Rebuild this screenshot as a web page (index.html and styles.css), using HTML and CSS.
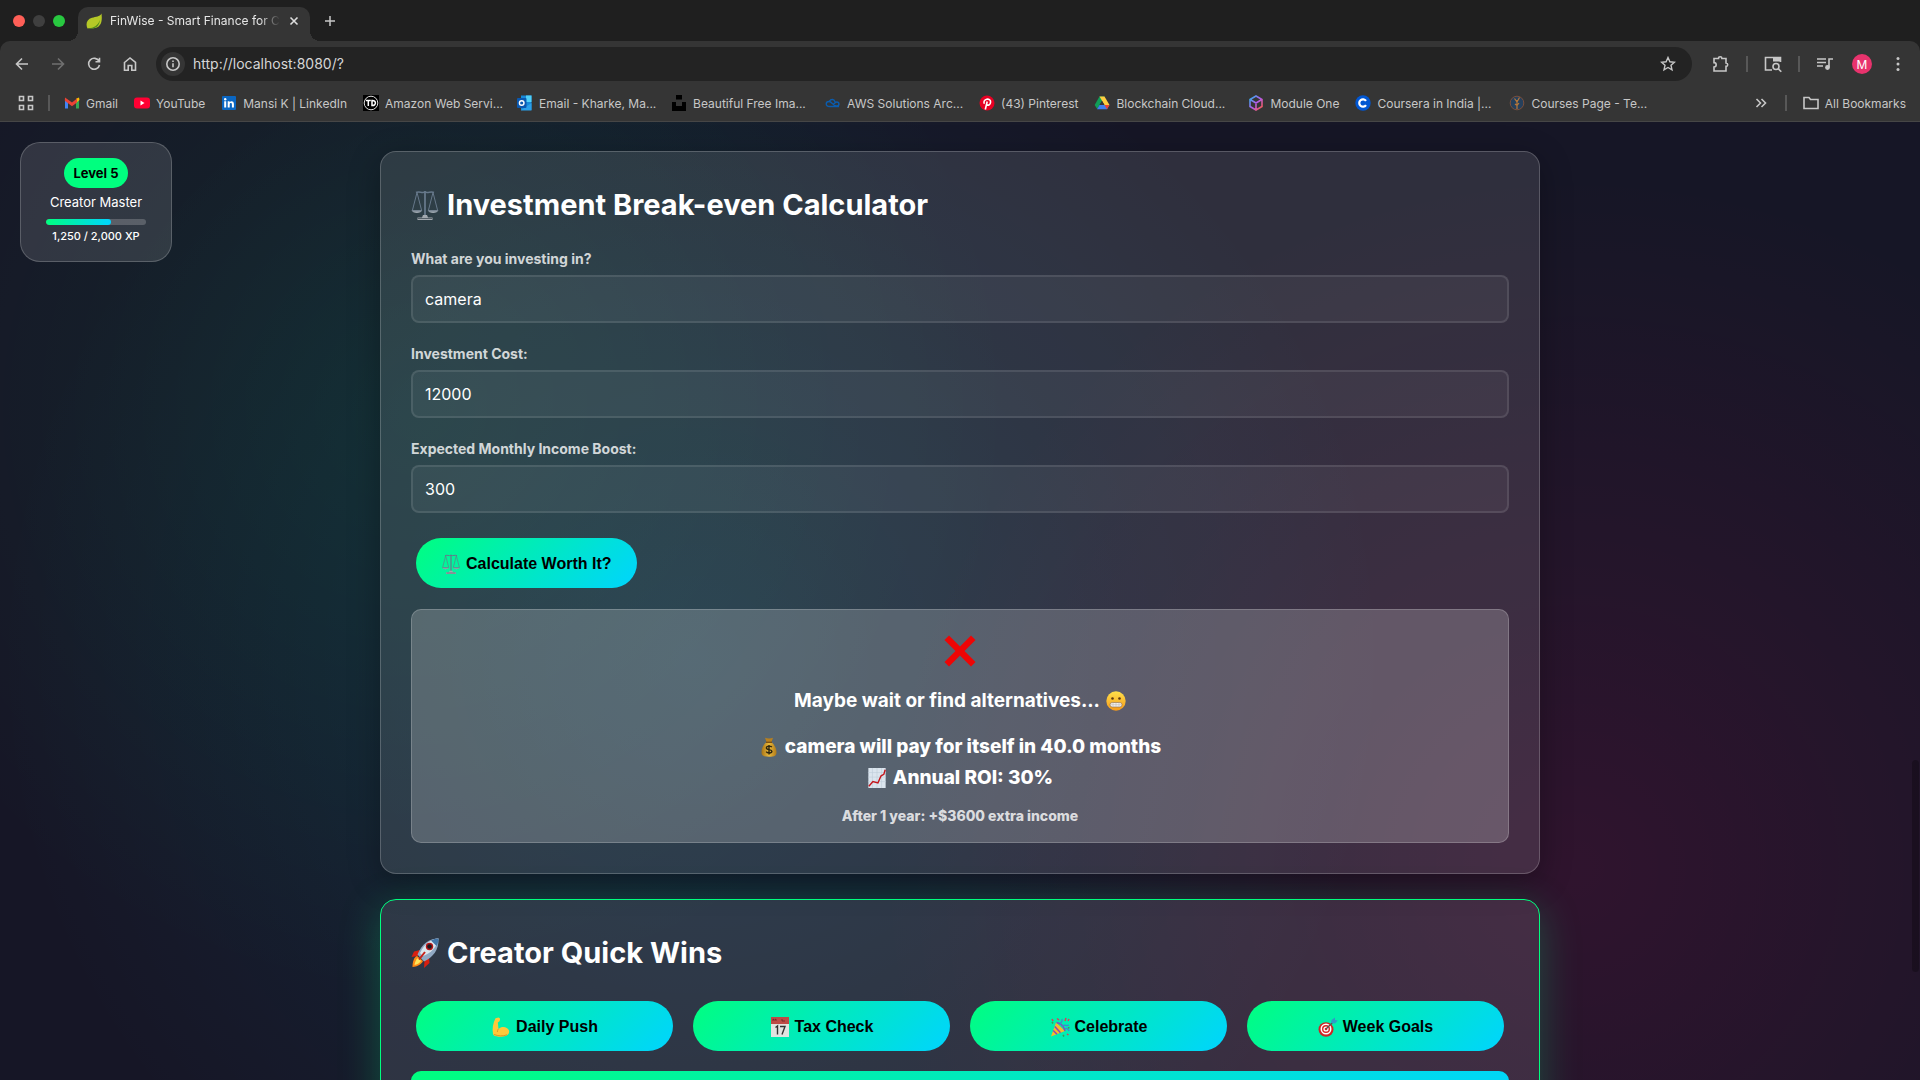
FILE: index.html
```html
<!DOCTYPE html>
<html lang="en">
<head>
<meta charset="utf-8">
<title>FinWise - Smart Finance for Creators</title>
<link rel="stylesheet" href="styles.css">
</head>
<body>
<svg class="defs" aria-hidden="true">
  <defs>
    <linearGradient id="metal" x1="0" y1="0" x2="0" y2="1"><stop offset="0" stop-color="#6c7b8a"/><stop offset="1" stop-color="#a9b1b8"/></linearGradient>
    <linearGradient id="face" x1="0" y1="0" x2="0" y2="1"><stop offset="0" stop-color="#ffe04a"/><stop offset="1" stop-color="#f59a1b"/></linearGradient>
    <linearGradient id="gold" x1="0" y1="0" x2="1" y2="0"><stop offset="0" stop-color="#a87416"/><stop offset=".5" stop-color="#e9b93c"/><stop offset="1" stop-color="#b07a18"/></linearGradient>
    <linearGradient id="cube" x1="0" y1="0" x2="1" y2="1"><stop offset="0" stop-color="#22b8e6"/><stop offset=".5" stop-color="#b05cf0"/><stop offset="1" stop-color="#ff5a3c"/></linearGradient>
    <symbol id="scale" viewBox="0 0 28 30">
      <g fill="none" stroke="#66788a" stroke-width="1"><path d="M5 2.500C8 .8 11 3.400 14 2c3 1.400 6-1.200 9 .5" stroke-width="1.500"/><path d="M6 2.500 1.500 20M6 2.500 10.500 20M22 2.500 17.500 20M22 2.500 26.500 20"/><path d="M14 1v25" stroke-width="1.800"/></g>
      <path d="M.5 20h10.800c-.8 4-10 4-10.800 0zM16.700 20h10.800c-.8 4-10 4-10.800 0z" fill="url(#metal)"/>
      <path d="M12 25h4l1 2.500h4.500V30h-15v-2.500H11z" fill="#a3a9af"/>
      <path d="M7 28.500h14" stroke="#566068"/>
    </symbol>
  </defs>
</svg>

<header class="browser">
  <div class="tabstrip">
    <div class="lights"><span class="light red"></span><span class="light grey"></span><span class="light green"></span></div>
    <div class="tab">
      <svg class="i16" viewBox="0 0 16 16"><path d="M15.500.5c.8 6.500.4 13.300-6.500 14.500-3 .5-5.500-.2-7.500.5C-.5 11 .5 6.500 6 4.800 10 3.600 13.500 4 15.500.5z" fill="#b5c827"/><path d="M1.500 15.200c6 .3 10-2.200 12.500-8.200-1 7-5 9.500-12.500 8.200z" fill="#4e8a1c"/></svg>
      <span class="tab-title">FinWise - Smart Finance for C</span>
      <button class="plain" aria-label="Close tab"><svg class="i12" viewBox="0 0 12 12"><path d="M2.500 2.500l7 7M9.500 2.500l-7 7" stroke="#ddd" stroke-width="1.600"/></svg></button>
    </div>
    <button class="plain newtab" aria-label="New tab"><svg class="i12" viewBox="0 0 12 12"><path d="M6 1v10M1 6h10" stroke="#c7c7c7" stroke-width="1.500"/></svg></button>
  </div>
  <div class="toolbar">
    <button class="plain nav" aria-label="Back"><svg class="i16" viewBox="0 0 16 16"><path d="M14 8H3M8 2.500 2.500 8 8 13.500" class="line"/></svg></button>
    <button class="plain nav dim" aria-label="Forward"><svg class="i16" viewBox="0 0 16 16"><path d="M2 8h11M8 2.500 13.500 8 8 13.500" class="line"/></svg></button>
    <button class="plain nav" aria-label="Reload"><svg class="i16" viewBox="0 0 16 16"><path d="M13 5.200A5.500 5.500 0 1 0 13.500 9M13.500 1.800v4H9.500" class="line"/></svg></button>
    <button class="plain nav" aria-label="Home"><svg class="i16" viewBox="0 0 16 16"><path d="M2.500 6.500 8 2l5.500 4.500V14.200H9.800V9.500H6.200v4.700H2.500z" class="line"/></svg></button>
    <div class="omnibox">
      <span class="siteinfo"><svg class="i16" viewBox="0 0 16 16"><circle cx="8" cy="8" r="6.200" class="line"/><path d="M8 7.300v4M8 4.500v1.500" class="line"/></svg></span>
      <input class="address" type="text" value="http://localhost:8080/?" aria-label="Address">
      <button class="plain" aria-label="Bookmark this page"><svg class="i16" viewBox="0 0 16 16"><path d="M8 1.500l1.900 4.300 4.600.4-3.500 3.100 1 4.600L8 11.500l-4 2.400 1-4.600L1.500 6.200l4.600-.4z" class="line thin"/></svg></button>
    </div>
    <div class="tools">
      <button class="plain" aria-label="Extensions"><svg class="i18" viewBox="0 0 18 18"><path d="M2 3.500h4.500a1.700 1.700 0 0 1 3.400 0H14V8a1.700 1.700 0 0 1 0 3.400v4.600H2v-4a2 2 0 0 0 0-4.400z" class="line"/></svg></button>
      <span class="bar"></span>
      <button class="plain" aria-label="Search tabs"><svg class="i18" viewBox="0 0 18 18"><path d="M8 15H1.500V2.500h15V7" class="line"/><path d="M9 2h8v4.500H9z" fill="#c7c7c7"/><circle cx="12" cy="11.500" r="3" class="line"/><path d="M14.300 13.800l3 3" class="line"/></svg></button>
      <span class="bar"></span>
      <button class="plain" aria-label="Media"><svg class="i18" viewBox="0 0 18 18"><path d="M1 4h9M1 7.500h9M1 11h6M13 12V4h4" class="line"/><circle cx="11.500" cy="12.500" r="2.400" fill="#c7c7c7"/></svg></button>
      <button class="plain avatar" aria-label="Profile">M</button>
      <button class="plain" aria-label="Menu"><svg class="i16" viewBox="0 0 16 16"><g fill="#c7c7c7"><circle cx="8" cy="2.500" r="1.500"/><circle cx="8" cy="8" r="1.500"/><circle cx="8" cy="13.500" r="1.500"/></g></svg></button>
    </div>
  </div>
  <nav class="bookmarks" aria-label="Bookmarks">
    <button class="plain" aria-label="Apps"><svg class="i16" viewBox="0 0 16 16"><path d="M1.500 1.500h4v4h-4zM10.500 1.500h4v4h-4zM1.500 10.500h4v4h-4zM10.500 10.500h4v4h-4z" class="line"/></svg></button>
    <span class="bar first"></span>
    <a class="bm" href="#"><svg class="i16" viewBox="0 0 16 16"><path d="M1 4v9.500h3V7z" fill="#4285f4"/><path d="M15 4v9.500h-3V7z" fill="#34a853"/><path d="M12 3.800 15 2.500 15.500 5 12 8z" fill="#fbbc04"/><path d="M1 2.500 8 7.500 13 3.500V7.500L8 11.300.8 5.800z" fill="#ea4335"/></svg><span>Gmail</span></a>
    <a class="bm" href="#"><svg class="i16" viewBox="0 0 16 16"><rect y="2.500" width="16" height="11" rx="3" fill="#ff0033"/><path d="M6.500 5.500v5l4-2.500z" fill="#fff"/></svg><span>YouTube</span></a>
    <a class="bm" href="#"><svg class="i16" viewBox="0 0 16 16"><rect x="1" y="1" width="14" height="14" rx="1" fill="#0a66c2"/><g fill="#fff"><circle cx="4.200" cy="4.300" r="1.200"/><path d="M3.200 6.300h2v6.200h-2zM6.700 6.300h1.900v.9c1-1.500 4.300-1.500 4.300 1.700v3.600h-2V9.400c0-2-2.200-1.800-2.200 0v3.100h-2z"/></g></svg><span>Mansi K | LinkedIn</span></a>
    <a class="bm long" href="#"><svg class="i16" viewBox="0 0 16 16"><rect width="16" height="16" fill="#000"/><circle cx="8" cy="8" r="6.800" fill="none" stroke="#ddd"/><path d="M2.800 5.500h5M5.300 5.500v5.500M9 5.500v5c4.500.5 4.500-5.500 0-5z" fill="none" stroke="#fff" stroke-width="1.500"/></svg><span>Amazon Web Servi...</span></a>
    <a class="bm long" href="#"><svg class="i16" viewBox="0 0 16 16"><path d="M4 .5h10.500V15H4z" fill="#1789d8"/><path d="M9 .5h5.500V7H9z" fill="#50d0f8"/><path d="M4 15 14.500 8v7.500H4z" fill="#2aa0ea"/><rect y="3" width="9.500" height="10" rx="1" fill="#0a58b0"/><circle cx="4.700" cy="8" r="2.300" fill="none" stroke="#fff" stroke-width="1.400"/></svg><span>Email - Kharke, Ma...</span></a>
    <a class="bm long" href="#"><svg class="i16" viewBox="0 0 16 16"><path d="M5 0h6v4.500H5zM1 7h4v4h6V7h4v9H1z"/></svg><span>Beautiful Free Ima...</span></a>
    <a class="bm long" href="#"><svg class="i16" viewBox="0 0 16 16"><path d="M14 11.500H4.500C0 11.500.5 6.500 4 6.500c3 0 4 4.500 7.500 4.500 3.500-.2 3-4 .3-4-1.500 0-2.300 1.500-3.300 2M4.500 6.300C6 3.500 9.500 4.300 10 6.800" fill="none" stroke="#0b5cad" stroke-width="1.400"/></svg><span>AWS Solutions Arc...</span></a>
    <a class="bm" href="#"><svg class="i16" viewBox="0 0 16 16"><circle cx="8" cy="8" r="7.500" fill="#e60023"/><path d="M6.300 14.500 8.200 6.500M5.300 8.800C3.200 3.500 11.800 2.400 11.600 7c-.1 3-2.800 4-4 2.300" fill="none" stroke="#fff" stroke-width="1.600"/></svg><span>(43) Pinterest</span></a>
    <a class="bm long" href="#"><svg class="i16" viewBox="0 0 16 16"><path d="M5.500 1.500h5L8 5.800 3.200 14 .7 10z" fill="#109d58"/><path d="M5.500 1.500h5l5 8.500h-5z" fill="#ffcd40"/><path d="M5.500 10h10l-2.500 4.300H3z" fill="#3f7ff0"/><path d="M10.500 10h5L13 14.300z" fill="#ea4335"/><path d="M8 6l2.400 4H5.600z" fill="#353535"/></svg><span>Blockchain Cloud...</span></a>
    <a class="bm" href="#"><svg class="i16" viewBox="0 0 16 16"><path d="M8 1l6 3.500v7L8 15l-6-3.500v-7zM2.500 4.800 8 8l5.500-3.200M8 8v6.500" fill="none" stroke="url(#cube)" stroke-width="1.600"/></svg><span>Module One</span></a>
    <a class="bm long" href="#"><svg class="i16" viewBox="0 0 16 16"><circle cx="8" cy="8" r="7.700" fill="#0056d2"/><path d="M11 5.900a3.700 3.700 0 1 0 0 4.200" fill="none" stroke="#fff" stroke-width="2.200"/></svg><span>Coursera in India |...</span></a>
    <a class="bm long" href="#"><svg class="i16" viewBox="0 0 16 16"><circle cx="8" cy="8" r="6.800" fill="#26405c" stroke="#7a4f3c"/><path d="M8 14V5M5.500 3.500 8 7l2.500-4.500M6 9l2 1.500L10 8" fill="none" stroke="#b8783a" stroke-width="1.200"/></svg><span>Courses Page - Te...</span></a>
    <div class="bm-end">
      <button class="plain" aria-label="More bookmarks"><svg class="i16" viewBox="0 0 16 16"><path d="M3.500 4 7.500 8l-4 4M8.500 4l4 4-4 4" class="line"/></svg></button>
      <span class="bar"></span>
      <a class="bm" href="#"><svg class="i16" viewBox="0 0 16 16"><path d="M1 13.500v-11h5l1.500 2H15v9z" class="line"/></svg><span>All Bookmarks</span></a>
    </div>
  </nav>
</header>

<div class="viewport">
  <aside class="level">
    <span class="badge">Level 5</span>
    <span class="rank">Creator Master</span>
    <div class="xpbar"><div class="xpfill" style="width:65%"></div></div>
    <span class="xp">1,250 / 2,000 XP</span>
  </aside>

  <main class="container">
    <section class="card">
      <h2><svg class="e28" viewBox="0 0 28 30"><use href="#scale"/></svg>Investment Break-even Calculator</h2>
      <form class="form" onsubmit="return false">
        <div class="field"><label for="item">What are you investing in?</label><input id="item" type="text" value="camera"></div>
        <div class="field"><label for="cost">Investment Cost:</label><input id="cost" type="text" inputmode="numeric" value="12000"></div>
        <div class="field"><label for="boost">Expected Monthly Income Boost:</label><input id="boost" type="text" inputmode="numeric" value="300"></div>
        <button class="btn" type="submit"><svg class="e20" viewBox="0 0 28 30"><use href="#scale"/></svg>Calculate Worth It?</button>
      </form>
      <div class="result">
        <svg class="cross" viewBox="0 0 32 32"><path d="M.5 5 5 .5 16 11.500 27 .5 31.500 5 20.500 16l11 11-4.500 4.500-11-11-11 11L.5 27l11-11z" fill="#ee0505"/></svg>
        <p class="verdict">Maybe wait or find alternatives... <svg class="e20" viewBox="0 0 20 20"><circle cx="10" cy="10" r="9.700" fill="url(#face)"/><circle cx="6.500" cy="7.500" r="1.300" fill="#5c3710"/><circle cx="13.500" cy="7.500" r="1.300" fill="#5c3710"/><rect x="4" y="11.500" width="12" height="4.500" rx="2.200" fill="#f4f1ee" stroke="#8b6a4a" stroke-width=".6"/><path d="M4.500 13.700h11M7 11.700v4M10 11.700v4M13 11.700v4" stroke="#b9b0a8" stroke-width=".5"/></svg></p>
        <div class="payback">
          <p><svg class="e20" viewBox="0 0 20 20"><path d="M6 .8c2 .8 6 .8 8 0L12.500 5h-5z" fill="#b8801e"/><path d="M7.500 5h5c3 2.500 5 6.500 5 10 0 3.500-1.500 4.700-7.500 4.700S2.500 18.500 2.500 15c0-3.500 2-7.500 5-10z" fill="url(#gold)"/><path d="M7 5.300h6" stroke="#7a4d10" stroke-width="1.300"/><path d="M12.800 10.200c-1-1.600-5.400-1.400-5.400.7 0 2.300 5.500 1.200 5.500 3.400 0 2.100-4.600 2.200-5.700.4M10 8v9.500" fill="none" stroke="#2b2410" stroke-width="1.400"/></svg> camera will pay for itself in 40.0 months</p>
          <p><svg class="e20" viewBox="0 0 20 22"><rect x=".5" width="19" height="22" fill="#dbe5ee"/><path d="M5 0v22M10 0v22M15 0v22M0 5h20M0 10h20M0 15h20" stroke="#bccbd8" stroke-width=".6"/><path d="M1 20l4.500-5 5.500 1.500 3.500-8 3-1.500 1.500-5" fill="none" stroke="#c4161c" stroke-width="1.600"/></svg> Annual ROI: 30%</p>
        </div>
        <p class="extra">After 1 year: +$3600 extra income</p>
      </div>
    </section>

    <section class="card wins">
      <h2><svg class="e28" viewBox="0 0 28 30"><path d="M9 12 3 13.500.5 19l6.500-1zM18 19l.5 6-5.500 5 .5-7.500z" fill="#d81f10"/><path d="M6 18c-3 1-4.500 6-4.500 11 4.500-.5 8.500-2 10.500-6z" fill="#ff8a14"/><path d="M7 20c-2 1.500-3 4-3.500 7 2.500-.5 5-1.500 6.500-4z" fill="#ffe65a"/><path d="M27.500.5C18 .5 11 6 6.500 16.500l6.500 7C22 19 28 12 27.500.5z" fill="#91a9c4"/><path d="M27.500.5C20 1 14 5 9 15l3 3C20 15 26 9 27.500.5z" fill="#dce6ee"/><path d="M27.500.5c-3 0-5.500.8-7.500 2l5.500 5.500c1.500-2.200 2-5 2-7.500z" fill="#4175a8"/><circle cx="18.500" cy="8.500" r="3.700" fill="#b71717"/><circle cx="18.500" cy="8.500" r="2.300" fill="#171b25"/><path d="M14 14 8 21.500" stroke="#c8201a" stroke-width="2"/></svg>Creator Quick Wins</h2>
      <div class="wins-grid">
        <button class="btn"><svg class="e20" viewBox="0 0 20 20"><path d="M4.500 1.200 7.500.5c1.700.1 2 2 1 3.700L6.800 5.500 7.500 12c3-3.200 9-2.500 10.500 1.500 1 4-3 6-7.500 6.200-4.500.2-8-.5-8.500-3C1 12 2 6 4.500 1.200z" fill="#ffc83a"/><path d="M7.500 12c-.8.8-1.200 1.800-1 3M3 17.500c4 1.500 9 2 13 .3" fill="none" stroke="#d9962a"/></svg>Daily Push</button>
        <button class="btn"><svg class="e20" viewBox="0 0 20 20"><path d="M1 0h18v20H1z" fill="#e2e2e0"/><path d="M1 0h18v7H1z" fill="#bd4a46"/><path d="M3 4V2l1.500 1L6 2v2M12 2v2h3" fill="none" stroke="#5e1c1c" stroke-width=".7"/><path d="M5.500 10.500l2-1.500v8.500M10 9.500h5l-3 8" fill="none" stroke="#333" stroke-width="1.400"/></svg>Tax Check</button>
        <button class="btn"><svg class="e20" viewBox="0 0 20 20"><path d="M6 5.500 1 19.500 15 14z" fill="#f5b92c"/><path d="M4.800 9.500l5.700 6.200M3.200 13.500l3.800 3.800M6.500 5.500c4 .8 7.500 4 8.500 8.500" fill="none" stroke="#8b49b8" stroke-width="1.500"/><path d="M10 8c0-3 3-2 2-6M12 10c2-4 4 0 7-2M15 12c1-1 3-1 4 2" fill="none" stroke="#3e8ad0" stroke-width="1.400"/><path d="M7 1.500l2 1.500M16 1l-1 3M18 4l1-2M17 17l1.500 1M2 2l1 2" stroke="#dc3d55" stroke-width="1.500"/><path d="M2 5l1 1.500M13 18l1 1.500M18 11l1.500-.5" stroke="#3b9b56" stroke-width="1.500"/></svg>Celebrate</button>
        <button class="btn"><svg class="e20" viewBox="0 0 20 20"><ellipse cx="8" cy="12.500" rx="7.500" ry="7.300" fill="#cf2424"/><circle cx="8" cy="12" r="5.500" fill="#fff"/><circle cx="8" cy="12" r="4" fill="#d22"/><circle cx="8" cy="12" r="2.600" fill="#fff"/><circle cx="8" cy="12" r="1.300" fill="#d22"/><path d="M8 12l7-7" stroke="#555" stroke-width="1.200"/><path d="M13 6l.5-3L17 .5V3l2.800.5L17 6.500z" fill="#2f9ac8"/></svg>Week Goals</button>
      </div>
      <div class="tip"></div>
    </section>
  </main>
  <div class="thumb"></div>
</div>
</body>
</html>
```
FILE: styles.css
```css
* { box-sizing: border-box; }
body {
  margin: 0;
  height: 100vh;
  display: flex;
  flex-direction: column;
  overflow: hidden;
  background: #1a1a2e;
  color: #fff;
  font-family: Inter, "Liberation Sans", sans-serif;
}
svg { display: block; flex: none; }
.defs { position: absolute; width: 0; height: 0; }
p, h2 { margin: 0; }
.i12 { width: 12px; height: 12px; }
.i16 { width: 16px; height: 16px; }
.i18 { width: 18px; height: 18px; }
.e20 { width: 20px; height: 20px; }
.e28 { width: 28px; height: 30px; }
.line { fill: none; stroke: #c7c7c7; stroke-width: 1.6; }
.thin { stroke-width: 1.4; }
.plain {
  border: 0;
  padding: 0;
  background: none;
  color: inherit;
  font: inherit;
  display: flex;
  align-items: center;
  justify-content: center;
}

/* Browser frame */
.browser { flex: none; background: #1f1f1f; font-size: 12px; }
.tabstrip { display: flex; height: 41px; padding-left: 13px; }
.lights { display: flex; align-items: center; gap: 8px; width: 65px; }
.light { width: 12px; height: 12px; border-radius: 50%; }
.red { background: #ff5f57; }
.grey { background: #3f3f3f; }
.green { background: #28c840; }
.tab {
  display: flex;
  align-items: center;
  gap: 8px;
  width: 232px;
  margin-top: 7px;
  padding: 0 10px 7px 8px;
  border-radius: 10px 10px 0 0;
  background: #353535;
  position: relative;
}
.tab::before, .tab::after {
  content: "";
  position: absolute;
  bottom: 0;
  width: 10px;
  height: 10px;
}
.tab::before { left: -10px; background: radial-gradient(circle at 0 0, transparent 10px, #353535 10px); }
.tab::after { right: -10px; background: radial-gradient(circle at 100% 0, transparent 10px, #353535 10px); }
.tab-title {
  flex: 1;
  overflow: hidden;
  white-space: nowrap;
  color: #e6e6e6;
  mask-image: linear-gradient(90deg, #000 88%, transparent);
}
.newtab { margin-left: 14px; }
.toolbar {
  display: flex;
  align-items: center;
  height: 46px;
  padding: 0 14px;
  gap: 20px;
  background: #353535;
  border-radius: 10px 10px 0 0;
}
.dim { opacity: .4; }
.omnibox {
  display: flex;
  align-items: center;
  flex: 1;
  height: 34px;
  margin-left: -2px;
  padding: 0 16px 0 5px;
  gap: 8px;
  border-radius: 17px;
  background: #232323;
}
.siteinfo {
  display: grid;
  place-items: center;
  width: 24px;
  height: 24px;
  border-radius: 50%;
  background: #353535;
}
.address {
  flex: 1;
  border: 0;
  padding: 0 0 2px;
  outline: 0;
  background: none;
  color: #d6d6d6;
  font: 14px Inter, "Liberation Sans", sans-serif;
}
.toolbar .nav { width: 16px; }
.tools { display: flex; align-items: center; gap: 18px; }
.tools .bar { margin: 0 -2px; }
.bar { width: 2px; height: 16px; background: #585858; }
.avatar { width: 20px; height: 20px; border-radius: 50%; background: #e8336d; color: #fff; }
.bookmarks {
  display: flex;
  align-items: center;
  height: 35px;
  padding: 0 14px 2px 18px;
  gap: 16px;
  background: #353535;
  border-bottom: 1px solid #464646;
  color: #c7c7c7;
}
.first { margin: 0 -2px 0 -2px; }
.bm { display: flex; align-items: center; gap: 6px; color: inherit; text-decoration: none; white-space: nowrap; }
.long span { width: 116px; }
.bm-end { display: flex; align-items: center; gap: 16px; margin-left: auto; }

/* Page */
.viewport {
  position: relative;
  flex: 1;
  min-height: 0;
  overflow: hidden;
  background:
    radial-gradient(circle at 22% 30%, rgba(0, 255, 127, .08), transparent 36%),
    radial-gradient(circle at 82% 78%, rgba(255, 0, 110, .11), transparent 40%),
    radial-gradient(circle at 36% 56%, rgba(0, 212, 255, .1), transparent 52%),
    #161626;
}
.container { max-width: 1200px; margin: 0 auto; padding: 29px 20px; display: flex; flex-direction: column; gap: 25px; }
.card {
  padding: 30px;
  border: 1px solid rgba(255, 255, 255, .2);
  border-radius: 16px;
  background: rgba(255, 255, 255, .11);
  box-shadow: 0 8px 32px rgba(0, 0, 0, .3);
}
h2 { display: flex; align-items: center; gap: 8px; height: 45px; margin-bottom: 21px; font-size: 29px; font-weight: 700; }
.form { display: flex; flex-direction: column; align-items: flex-start; }
.field { display: flex; flex-direction: column; width: 100%; margin-bottom: 20px; }
.field label { margin-bottom: 5px; color: rgba(255, 255, 255, .8); font-size: 14px; line-height: 22px; font-weight: 700; }
.field input {
  width: 100%;
  height: 48px;
  padding: 0 12px;
  border: 2px solid rgba(255, 255, 255, .1);
  border-radius: 8px;
  outline: 0;
  background: rgba(255, 255, 255, .05);
  color: #fff;
  font: 16px Inter, "Liberation Sans", sans-serif;
}
.btn {
  display: flex;
  align-items: center;
  justify-content: center;
  gap: 5px;
  height: 50px;
  margin: 5px;
  padding: 2px 25px 0;
  border: 0;
  border-radius: 25px;
  background: linear-gradient(135deg, #00ff7f, #00d4ff);
  color: #000;
  font: bold 16px "Liberation Sans", sans-serif;
}
.result {
  display: flex;
  flex-direction: column;
  align-items: center;
  margin-top: 16px;
  padding: 25px 20px 14px;
  border: 1px solid rgba(255, 255, 255, .2);
  border-radius: 10px;
  background: rgba(255, 255, 255, .2);
  font-size: 19px;
  line-height: 31px;
  font-weight: 700;
}
.result p { display: flex; align-items: center; justify-content: center; gap: 6px; }
.cross { width: 32px; height: 32px; }
.verdict { margin: 18px 0 15px; }
.payback { font-weight: 800; }
.result .extra { margin-top: 11px; color: rgba(255, 255, 255, .8); font-size: 14px; line-height: 24px; font-weight: 800; }
.wins { border-color: #00ff7f; box-shadow: 0 10px 40px rgba(0, 255, 127, .25); }
.wins-grid { display: grid; grid-template-columns: repeat(4, 1fr); gap: 10px; margin-bottom: 15px; }
.tip { height: 80px; border-radius: 10px; background: linear-gradient(135deg, #00ff7f, #00d4ff); }
.level {
  position: absolute;
  top: 20px;
  left: 20px;
  display: flex;
  flex-direction: column;
  align-items: center;
  width: 152px;
  padding: 15px 25px 14px;
  border: 1px solid rgba(255, 255, 255, .2);
  border-radius: 20px;
  background: rgba(255, 255, 255, .12);
}
.badge { padding: 0 9px; border-radius: 15px; background: #00ff7f; color: #000; font-size: 13px; line-height: 30px; font-weight: 700; }
.rank { font-size: 13px; line-height: 28px; }
.xpbar { width: 100px; height: 6px; margin-top: 3px; overflow: hidden; border-radius: 3px; background: rgba(255, 255, 255, .2); }
.xpfill { height: 6px; border-radius: 3px; background: linear-gradient(90deg, #00ff7f, #00d4ff); }
.xp { font-size: 11px; line-height: 22px; font-weight: 500; }
.thumb { position: absolute; top: 638px; right: 1px; width: 7px; height: 212px; border-radius: 4px; background: rgba(0, 0, 0, .25); }
```
